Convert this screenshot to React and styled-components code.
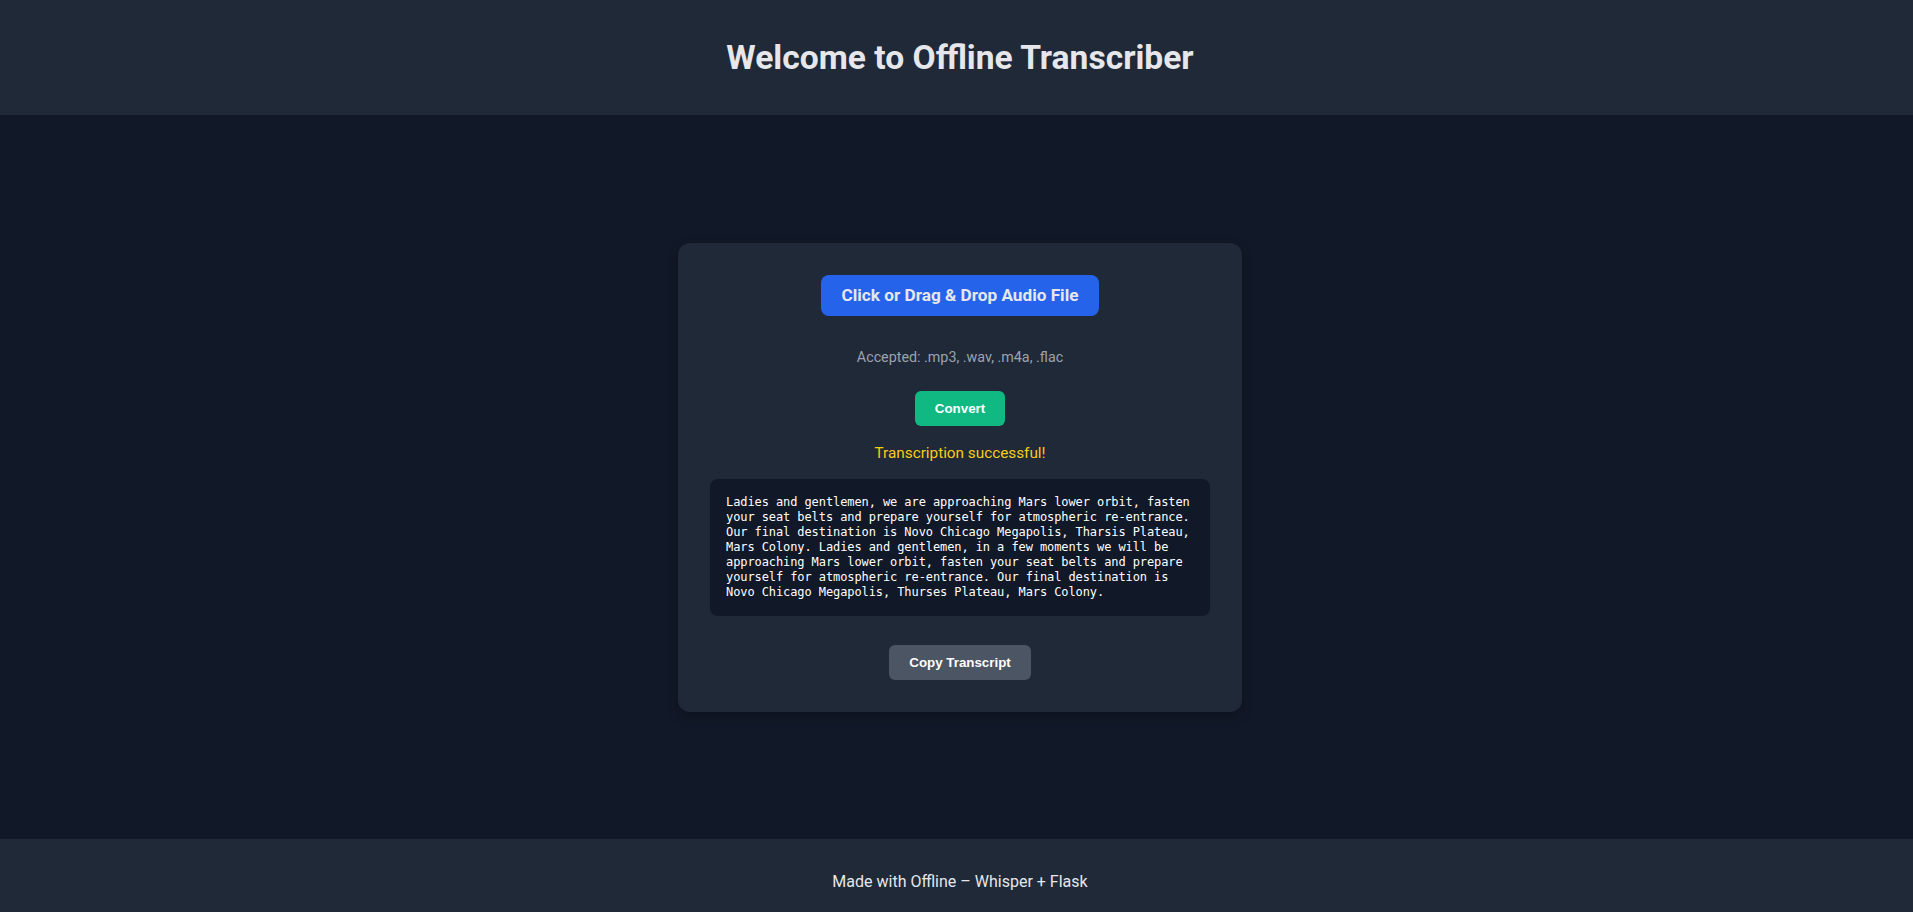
import React from 'react';
import styled, { createGlobalStyle } from 'styled-components';

const GlobalStyle = createGlobalStyle`
    * { box-sizing: border-box; }
    html, body {
        margin: 0;
        padding: 0;
        overflow: hidden;
        background: #111827;
        color: #e5e7eb;
        font-family: Roboto, "Noto Sans", sans-serif;
    }
`;

const transcript =
    'Ladies and gentlemen, we are approaching Mars lower orbit, fasten your seat belts and prepare yourself for atmospheric re-entrance. Our final destination is Novo Chicago Megapolis, Tharsis Plateau, Mars Colony. Ladies and gentlemen, in a few moments we will be approaching Mars lower orbit, fasten your seat belts and prepare yourself for atmospheric re-entrance. Our final destination is Novo Chicago Megapolis, Thurses Plateau, Mars Colony.';

function App() {
    return (
        <Page>
            <GlobalStyle />
            <Header>
                <h1>Welcome to Offline Transcriber</h1>
            </Header>
            <Main>
                <Card>
                    <UploadLabel htmlFor="audio">Click or Drag &amp; Drop Audio File</UploadLabel>
                    <input id="audio" type="file" accept=".mp3,.wav,.m4a,.flac" hidden />
                    <Hint>Accepted: .mp3, .wav, .m4a, .flac</Hint>
                    <Button $bg="#10b981">Convert</Button>
                    <Status>Transcription successful!</Status>
                    <Transcript>{transcript}</Transcript>
                    <Button $bg="#4b5563" $top="29px">Copy Transcript</Button>
                </Card>
            </Main>
            <Footer>Made with Offline – Whisper + Flask</Footer>
        </Page>
    );
}

const Page = styled.div`
    display: flex;
    flex-direction: column;
    height: 100vh;
    min-width: 1920px;
`;

const Header = styled.header`
    height: 115px;
    flex-shrink: 0;
    background: #1f2937;
    display: flex;
    align-items: center;
    justify-content: center;

    h1 {
        margin: 0;
        font-size: 33.6px;
        font-weight: 700;
        line-height: 38px;
        color: #e5e7eb;
    }
`;

const Main = styled.main`
    flex: 1;
    display: flex;
    align-items: center;
    justify-content: center;
`;

const Card = styled.section`
    width: 564px;
    padding: 32px;
    background: #1f2937;
    border-radius: 12px;
    box-shadow: 0 4px 12px rgba(0, 0, 0, 0.25);
    display: flex;
    flex-direction: column;
    align-items: center;
`;

const UploadLabel = styled.label`
    display: inline-block;
    padding: 10px 20px;
    background: #2563eb;
    color: #e5e7eb;
    border-radius: 8px;
    font-size: 17.2px;
    font-weight: 700;
    line-height: 21px;
    cursor: pointer;
`;

const Hint = styled.p`
    margin: 32px 0 0;
    font-size: 14.3px;
    line-height: 19px;
    color: #9ca3af;
`;

const Button = styled.button`
    margin-top: ${(p) => p.$top || '24px'};
    padding: 10px 20px;
    border: none;
    border-radius: 6px;
    background: ${(p) => p.$bg};
    color: #ffffff;
    font-family: "Liberation Sans", Arial, sans-serif;
    font-size: 13.333px;
    font-weight: 700;
    line-height: 15px;
    cursor: pointer;
`;

const Status = styled.p`
    margin: 17px 0 0;
    font-size: 15.3px;
    line-height: 21px;
    color: #facc15;
`;

const Transcript = styled.pre`
    margin: 15px 0 0;
    width: 100%;
    padding: 16px;
    background: #111827;
    border-radius: 8px;
    color: #ffffff;
    font-family: "DejaVu Sans Mono", "Liberation Mono", monospace;
    font-size: 12px;
    letter-spacing: -0.09px;
    line-height: 15px;
    white-space: pre-wrap;
    word-wrap: break-word;
    text-align: left;
`;

const Footer = styled.footer`
    height: 73px;
    flex-shrink: 0;
    background: #1f2937;
    padding-top: 32px;
    text-align: center;
    font-size: 16px;
    line-height: 21px;
    color: #e5e7eb;
`;

export default App;
